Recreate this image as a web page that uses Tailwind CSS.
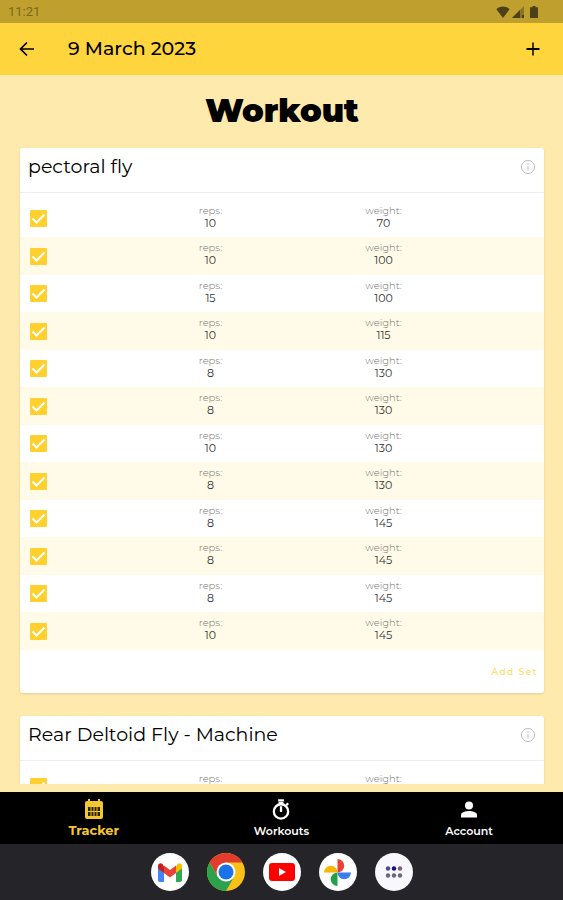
<!DOCTYPE html>
<html lang="en">
<head>
    <meta charset="UTF-8">
    <meta name="viewport" content="width=device-width, initial-scale=1.0">
    <title>Workout</title>
    <script src="https://cdn.jsdelivr.net/npm/@tailwindcss/browser@4"></script>
</head>
<body class="flex h-screen flex-col overflow-hidden bg-[#ffeaad] font-['Montserrat','Inter',sans-serif] text-black">
    <!-- status bar -->
    <div class="flex h-[23px] shrink-0 items-center justify-between bg-[#bfa02e] pr-[25px] pl-2 text-[#4b4018]">
        <span class="font-['Roboto',sans-serif] text-[13px] text-[#7b681f]">11:21</span>
        <div class="flex items-center gap-[2px]">
            <svg class="h-3 w-[14px]" viewBox="0 0 14 12" fill="currentColor"><path d="M7 12 .4 3.2C2 1.600 4.300.6 7 .6s5 1 6.600 2.600z"/></svg>
            <svg class="h-3 w-3" viewBox="0 0 12 12"><path d="M0 12 12 0v12z" fill="currentColor" opacity=".45"/><path d="M0 12 8 4v8zM10 9h2v3h-2z" fill="currentColor"/></svg>
            <svg class="ml-1 h-3 w-2" viewBox="0 0 8 12" fill="currentColor"><path d="M2.500 0h3v1.300H8V12H0V1.300h2.500z"/></svg>
        </div>
    </div>

    <!-- app bar -->
    <header class="flex h-[52px] shrink-0 items-center bg-[#ffd53d] px-[18px]">
        <button type="button" aria-label="Back">
            <svg class="size-[18px]" viewBox="0 0 18 18" fill="none" stroke="currentColor" stroke-width="1.7"><path d="M16 9H3M9 2.500 2.500 9 9 15.500"/></svg>
        </button>
        <h2 class="ml-8 flex-1 text-[19px] leading-6 font-medium">9 March 2023</h2>
        <button type="button" class="mr-1" aria-label="Add exercise">
            <svg class="size-4" viewBox="0 0 16 16" fill="none" stroke="currentColor"><path d="M1.500 8h13" stroke-width="2"/><path d="M8 1.500v13" stroke-width="1.500"/></svg>
        </button>
    </header>

    <main class="min-h-0 flex-1 pb-2">
        <div class="h-full overflow-hidden pr-[19px] pl-5">
            <h1 class="pt-4 pb-[17px] text-center text-[32px] leading-10 font-black">Workout</h1>
            <div id="exercises" class="flex flex-col gap-[23px]"></div>
        </div>
    </main>

    <nav class="grid h-[52px] shrink-0 grid-cols-3 bg-black text-[11px] leading-4 font-semibold text-white">
        <a href="#tracker" class="flex flex-col items-center pt-[7px] font-bold text-[#f5c72f]">
            <svg class="h-[21px] w-5" viewBox="0 0 20 21"><path d="M3 2h1V0h2v2h8V0h2v2h1q2 0 2 2v14q0 2-2 2H3q-2 0-2-2V4q0-2 2-2z" fill="currentColor"/><path d="M4 8h12v9H4z" fill="#2b2204"/><path d="M7 8v9M10 8v9M13 8v9M4 12.500h12" stroke="currentColor"/></svg>
            <span class="mt-[2px] text-[13px]">Tracker</span>
        </a>
        <a href="#workouts" class="flex flex-col items-center pt-[7px]">
            <svg class="h-[21px] w-5" viewBox="0 0 20 22" fill="none" stroke="currentColor" stroke-width="2.400"><circle cx="10" cy="13" r="7.500"/><path d="M7 1.500h6M10 7.500v6M15.500 6.500 17.500 4.500"/><path d="M7.500 3h5v3h-5z" fill="currentColor" stroke="none"/></svg>
            <span class="mt-[3px]">Workouts</span>
        </a>
        <a href="#account" class="flex flex-col items-center pt-[7px]">
            <svg class="h-[21px] w-5" viewBox="0 0 20 21" fill="currentColor"><circle cx="10" cy="6.500" r="4"/><path d="M2 18.500V16C2 13 7 12 10 12s8 1 8 4v2.500z"/></svg>
            <span class="mt-[3px]">Account</span>
        </a>
    </nav>

    <!-- system dock -->
    <div class="flex h-14 shrink-0 items-center justify-center gap-[18px] bg-[#252529]">
        <button type="button" class="grid size-[38px] place-items-center rounded-full bg-white" aria-label="Gmail">
            <svg class="h-[19px] w-[26px]" viewBox="0 0 26 19"><path d="M1 4v13q0 2 2 2h4V8z" fill="#4285f4"/><path d="M25 4v13q0 2-2 2h-4V8z" fill="#34a853"/><path d="M19 3.500V10l6-4.500V3c0-2.500-2.500-3.500-4.500-2z" fill="#fbbc04"/><path d="M1 5.500 7 10V3.500L5.500 1C3.500-.5 1 .5 1 3z" fill="#c5221f"/><path d="M7 10V2.500L13 7l6-4.500V10l-6 4.500z" fill="#ea4335"/></svg>
        </button>
        <button type="button" class="size-[38px]" aria-label="Chrome">
            <svg class="size-full" viewBox="0 0 38 38"><circle cx="19" cy="19" r="19" fill="#fbc116"/><path d="M2.550 9.500A19 19 0 0 1 35.450 9.500H19L10.800 23.700z" fill="#e33b2e"/><path d="M2.550 9.500A19 19 0 0 0 19 38l8.200-14.200L10.800 23.700z" fill="#2da24c"/><circle cx="19" cy="19" r="9.500" fill="#fff"/><circle cx="19" cy="19" r="7.500" fill="#1a73e8"/></svg>
        </button>
        <button type="button" class="grid size-[38px] place-items-center rounded-full bg-white" aria-label="YouTube">
            <svg class="h-[18px] w-[26px]" viewBox="0 0 26 18"><rect width="26" height="18" rx="3" fill="#f00"/><path d="m10 5 7 4-7 4z" fill="#fff"/></svg>
        </button>
        <button type="button" class="grid size-[38px] place-items-center rounded-full bg-white" aria-label="Photos">
            <svg class="size-[27px]" viewBox="0 0 28 28"><path d="M14 0a7 7 0 0 1 0 14z" fill="#ea4335"/><path d="M28 14a7 7 0 0 1-14 0z" fill="#3b7ded"/><path d="M14 28a7 7 0 0 1 0-14z" fill="#21a04a"/><path d="M0 14a7 7 0 0 1 14 0z" fill="#fbb604"/></svg>
        </button>
        <button type="button" class="grid size-[38px] place-items-center rounded-full bg-[#f8f7fd]" aria-label="All apps">
            <svg class="h-3 w-[18px]" viewBox="0 0 18 12" fill="#696779"><circle cx="3" cy="2.500" r="2.200" fill="#50478c"/><circle cx="9" cy="2.500" r="2.200" fill="#16107c"/><circle cx="15" cy="2.500" r="2.200" fill="#8b5876"/><circle cx="3" cy="9.500" r="2.200"/><circle cx="9" cy="9.500" r="2.200"/><circle cx="15" cy="9.500" r="2.200"/></svg>
        </button>
    </div>

    <script>
        const exercises = [
            {
                name: 'pectoral fly',
                sets: [[10, 70], [10, 100], [15, 100], [10, 115], [8, 130], [8, 130], [10, 130], [8, 130], [8, 145], [8, 145], [8, 145], [10, 145]]
            },
            { name: 'Rear Deltoid Fly - Machine', sets: [[10, 70]] }
        ];

        const setRow = ([reps, weight], i) => `
            <li class="grid h-[37px] grid-cols-[104fr_173fr_173fr_74fr] items-center even:h-[38px] even:bg-[#fffbe8]">
                <label class="relative ml-[10px] block size-[17px]">
                    <input type="checkbox" checked aria-label="Set ${i + 1} done" class="block size-full appearance-none rounded-[1px] bg-[#e5e5e5] checked:bg-[#ffd02e]">
                    <svg class="pointer-events-none absolute inset-0" viewBox="0 0 17 17" fill="none" stroke="#fff" stroke-width="2"><path d="m2.500 8.500 4 4 8-8"/></svg>
                </label>
                <div class="pb-1 text-center text-[11px] leading-3 text-[#333]"><div class="text-[10px] font-light text-[#777]">reps:</div>${reps}</div>
                <div class="pb-1 text-center text-[11px] leading-3 text-[#333]"><div class="text-[10px] font-light text-[#777]">weight:</div>${weight}</div>
            </li>`;

        document.getElementById('exercises').innerHTML = exercises.map(ex => `
            <section class="rounded-[3px] bg-white shadow-sm">
                <div class="flex h-[45px] items-start justify-between border-b border-[#eee] px-2 pt-[7px]">
                    <h3 class="text-[19px] leading-6">${ex.name}</h3>
                    <button type="button" class="mt-1" aria-label="About ${ex.name}">
                        <svg class="size-4" viewBox="0 0 16 16" fill="none" stroke="#bbb"><circle cx="8" cy="8" r="6.500"/><path d="M8 7v4.500M8 4.500V6"/></svg>
                    </button>
                </div>
                <ul class="pt-[7px]">${ex.sets.map(setRow).join('')}</ul>
                <div class="flex h-[43px] items-center justify-end pr-[6px]">
                    <button type="button" class="text-[9px] font-medium tracking-[1.5px] text-[#ffd95c]">Add Set</button>
                </div>
            </section>`).join('');
    </script>
</body>
</html>
